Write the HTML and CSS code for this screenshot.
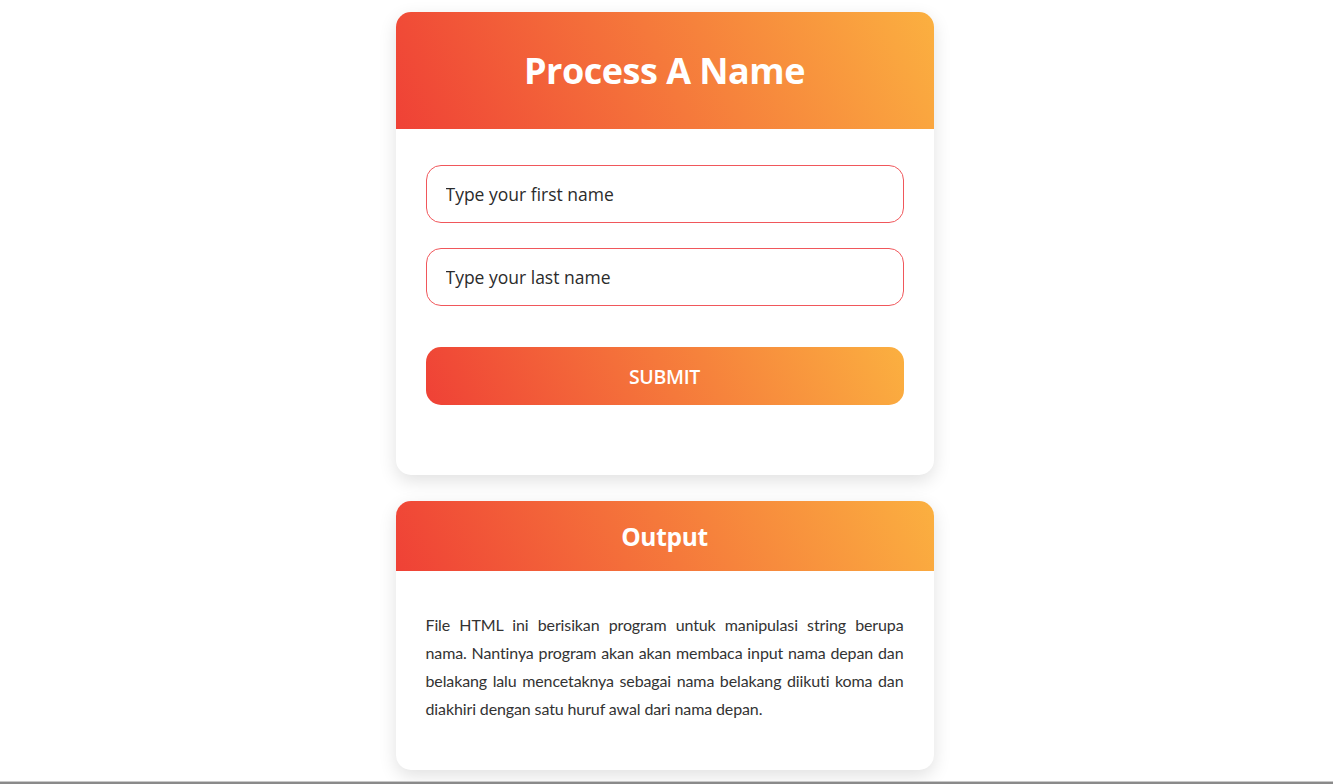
FILE: index.html
```html
<!DOCTYPE html>
<html lang="id">
<head>
<meta charset="utf-8">
<title>Process A Name</title>
<link rel="stylesheet" href="styles.css">
</head>
<body>
<main class="page">
  <section class="card card-form">
    <header class="card-head head-lg"><h1>Process A Name</h1></header>
    <form class="form">
      <input class="field" type="text" placeholder="Type your first name">
      <input class="field" type="text" placeholder="Type your last name">
      <button class="btn" type="button">SUBMIT</button>
    </form>
  </section>
  <section class="card card-out">
    <header class="card-head head-sm"><h2>Output</h2></header>
    <p class="desc">File HTML ini berisikan program untuk manipulasi string berupa nama. Nantinya program akan akan membaca input nama depan dan belakang lalu mencetaknya sebagai nama belakang diikuti koma dan diakhiri dengan satu huruf awal dari nama depan.</p>
  </section>
</main>
<div class="edge"></div>
</body>
</html>
```
FILE: styles.css
```css
* { box-sizing: border-box; }
html, body { margin: 0; padding: 0; background: #fff; }
body { font-family: "Open Sans", "Noto Sans", sans-serif; color: #333; overflow: hidden; height: 784px; }
.page { display: flex; flex-direction: column; align-items: center; gap: 26px; padding: 12px 4px 0 0; }
.card { width: 538px; background: #fff; border-radius: 15px; box-shadow: 0 6px 18px rgba(0,0,0,0.12); overflow: hidden; }
.card-head { background: linear-gradient(65deg, #ef4136, #fbb040); color: #fff; display: flex; align-items: center; justify-content: center; }
.head-lg { height: 117px; }
.head-sm { height: 70px; }
.card-head h1 { margin: 0; font-size: 36px; font-weight: 700; letter-spacing: -0.5px; }
.card-head h2 { margin: 0; font-size: 24.5px; font-weight: 700; letter-spacing: -0.3px; }
.form { display: flex; flex-direction: column; padding: 36px 30px 70px; }
.field { height: 58px; border: 1px solid #f0575b; border-radius: 15px; padding: 0 19px; font-family: "Open Sans", sans-serif; font-size: 17.5px; color: #333; outline: none; background: #fff; margin-bottom: 25px; }
.field::placeholder { color: #2b2b2b; }
.field + .field { margin-bottom: 41px; }
.btn { height: 58px; border: none; border-radius: 15px; background: linear-gradient(65deg, #ef4136, #fbb040); color: #fff; font-family: "Open Sans", sans-serif; font-weight: 600; font-size: 19.5px; letter-spacing: -0.3px; }
.desc { margin: 0; padding: 40px 30px 47px; font-family: Lato, "Open Sans", sans-serif; font-size: 16px; letter-spacing: -0.12px; line-height: 28px; text-align: justify; color: #333; }
.edge { position: fixed; left: 0; right: 0; bottom: 0; height: 3px; background: #8a8a8a; border-top: 1px solid #c8c8c8; }
```
